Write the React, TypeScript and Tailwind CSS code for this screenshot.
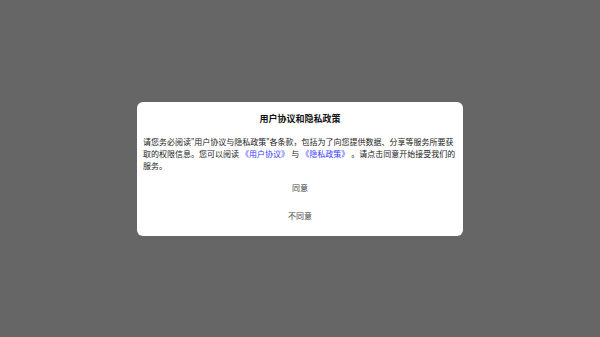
import React from 'react'

export default function App() {
    return (
        <div
            className="w-[600px] h-[337px] bg-[#666666] flex items-center justify-center"
            style={{ fontFamily: '"Noto Sans CJK SC", "Noto Sans", sans-serif' }}
        >
            <div className="w-[326px] bg-white rounded-[6px] pt-[10px] pb-[6px] flex flex-col">
                <h3 className="text-center text-[9px] font-bold text-[#111] leading-[14px]">用户协议和隐私政策</h3>
                <p
                    className="mt-[10px] pl-[6px] pr-[5px] text-[8px] leading-[12px] text-[#222]"
                    style={{ fontFamily: '"Noto Sans", "Noto Sans CJK SC", sans-serif' }}
                >
                    请您务必阅读"用户协议与隐私政策"各条款，包括为了向您提供数据、分享等服务所要获取的权限信息。您可以阅读{' '}
                    <span className="text-[#3b3bff]">《用户协议》</span> 与{' '}
                    <span className="text-[#3b3bff]">《隐私政策》</span> 。请点击同意开始接受我们的服务。
                </p>
                <button className="mt-[2px] h-[28px] text-[8px] text-[#444]">同意</button>
                <button className="h-[28px] text-[8px] text-[#444]">不同意</button>
            </div>
        </div>
    )
}
